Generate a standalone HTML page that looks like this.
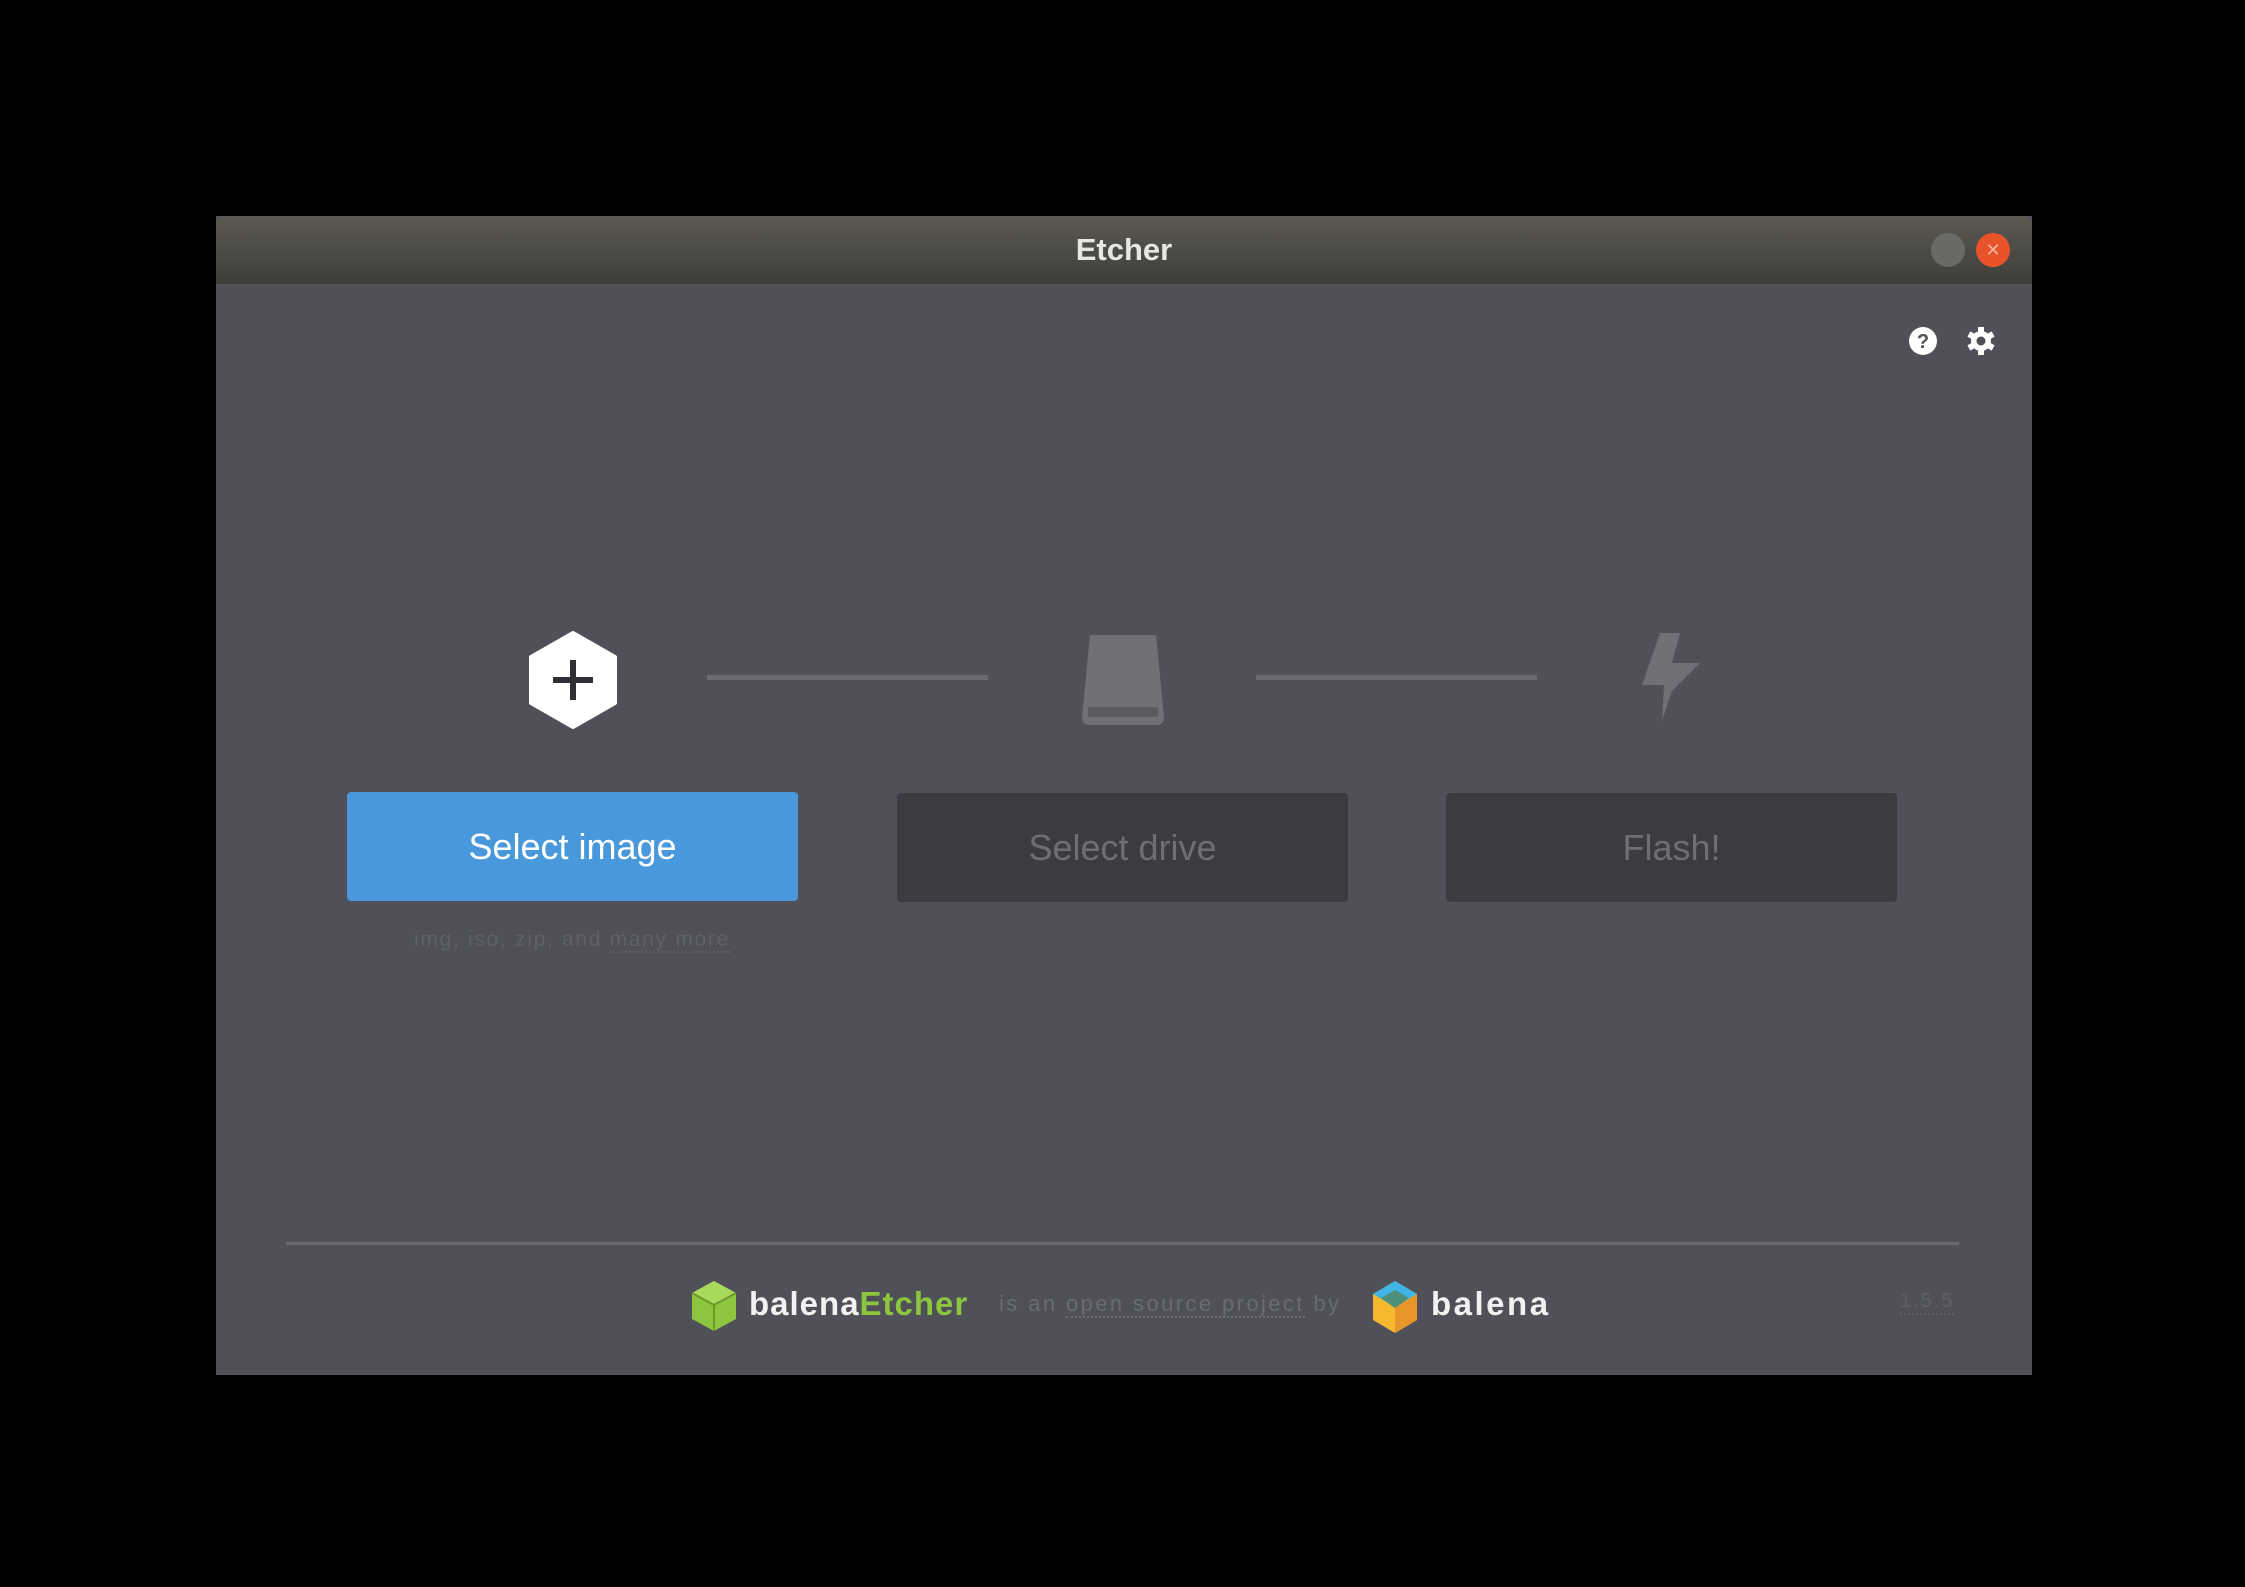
<!DOCTYPE html>
<html><head><meta charset="utf-8"><style>
html,body{margin:0;padding:0;background:#000;width:2245px;height:1587px;overflow:hidden;font-family:"Liberation Sans",sans-serif}
.win{position:absolute;left:216px;top:216px;width:1816px;height:1159px;background:#4f5058;}
.tb{position:absolute;left:0;top:0;width:100%;height:68px;background:linear-gradient(#5b5952,#3f3e39);border-radius:8px 8px 0 0}
.title{position:absolute;left:0;right:0;top:16px;text-align:center;color:#e8e6e0;font-weight:bold;font-size:31px}
.dot{position:absolute;top:17px;width:34px;height:34px;border-radius:50%}
.btn{position:absolute;top:576px;width:451px;height:109px;border-radius:4px;text-align:center;line-height:109px;font-size:36px}
.line{position:absolute;top:459px;height:5px;background:#6a6b70;width:281px}
.abs{position:absolute}
</style></head><body>
<div class="win">
 <div class="tb">
  <div class="title">Etcher</div>
  <div class="dot" style="left:1715px;background:#6a6964"></div>
  <div class="dot" style="left:1760px;background:#e8532a;color:#f6b29e;font-size:18px;text-align:center;line-height:34px">✕</div>
 </div>
 <svg class="abs" style="left:1692px;top:110px" width="30" height="30" viewBox="0 0 30 30"><circle cx="15" cy="15" r="14" fill="#fff"/><text x="15" y="22" text-anchor="middle" font-size="20" font-weight="bold" fill="#4f5058" font-family="Liberation Sans">?</text></svg>
 <svg class="abs" style="left:1750px;top:110px" width="30" height="30" viewBox="0 0 30 30"><g fill="#fff"><circle cx="15" cy="15" r="10"/><rect x="12" y="1" width="6" height="28"/><rect x="12" y="1" width="6" height="28" transform="rotate(60 15 15)"/><rect x="12" y="1" width="6" height="28" transform="rotate(120 15 15)"/></g><circle cx="15" cy="15" r="4.5" fill="#4f5058"/></svg>
 <svg class="abs" style="left:312px;top:415px" width="90" height="98" viewBox="0 0 90 98"><polygon points="45,2 87,26 87,72 45,96 3,72 3,26" fill="#fff" stroke="#fff" stroke-width="4" stroke-linejoin="round"/><rect x="42" y="29" width="6" height="40" fill="#2f3036"/><rect x="25" y="46" width="40" height="6" fill="#2f3036"/></svg>
 <div class="line" style="left:491px"></div>
 <svg class="abs" style="left:862px;top:417px" width="90" height="94" viewBox="0 0 90 94"><path d="M12 2 H78 L86 84 Q86 92 78 92 H12 Q4 92 4 84 Z" fill="#707176"/><rect x="10" y="74" width="70" height="10" rx="2" fill="#5a5b60"/></svg>
 <div class="line" style="left:1040px"></div>
 <svg class="abs" style="left:1424px;top:417px" width="62" height="90" viewBox="0 0 62 90"><polygon points="20,0 40,0 32,30 60,30 32,58 22,88 24,52 2,52" fill="#707176"/></svg>
 <div class="btn" style="left:131px;top:576px;background:#4a98dc;color:#fff">Select image</div>
 <div class="btn" style="left:681px;top:577px;background:#3b3c42;color:#6e6f74">Select drive</div>
 <div class="btn" style="left:1230px;top:577px;background:#3b3c42;color:#6e6f74">Flash!</div>
 <div class="abs" style="left:198px;top:712px;color:#5f6068;font-size:21px;white-space:nowrap;letter-spacing:1.7px">img, iso, zip, and <span style="border-bottom:2px dotted #5f6068">many more</span></div>
 <div class="abs" style="left:70px;top:1026px;width:1673px;height:3px;background:#696a6f"></div>
 <svg class="abs" style="left:474px;top:1064px" width="48" height="52" viewBox="0 0 48 52"><polygon points="24,1 46,13 46,39 24,51 2,39 2,13" fill="#8cc63f"/><polygon points="24,1 46,13 24,25 2,13" fill="#a8d95a"/><path d="M2 13 L24 25 L46 13 M24 25 V51" stroke="#6b9a2c" stroke-width="2" fill="none"/></svg>
 <div class="abs" style="left:533px;top:1069px;font-size:33px;font-weight:bold;color:#f2f2f2;letter-spacing:1px">balena<span style="color:#8cc63f">Etcher</span></div>
 <div class="abs" style="left:783px;top:1075px;font-size:22px;color:#6a6c72;white-space:nowrap;letter-spacing:2.4px">is an <span style="border-bottom:2px dotted #6a6c72">open source project</span> by</div>
 <svg class="abs" style="left:1155px;top:1064px" width="48" height="54" viewBox="0 0 48 54"><polygon points="24,1 46,14 46,40 24,53 2,40 2,14" fill="#f5b82e"/><polygon points="24,1 46,14 24,27 2,14" fill="#3fb4e5"/><polygon points="24,27 46,14 46,40 24,53" fill="#e8962a"/><polygon points="10,18 24,10 38,18 24,28" fill="#4e8f7a"/></svg>
 <div class="abs" style="left:1215px;top:1069px;font-size:33px;font-weight:bold;color:#f2f2f2;letter-spacing:2.5px">balena</div>
 <div class="abs" style="left:1684px;top:1074px;font-size:20px;color:#5f6068;border-bottom:2px dotted #5f6068;letter-spacing:2px">1.5.5</div>
</div>
</body></html>
